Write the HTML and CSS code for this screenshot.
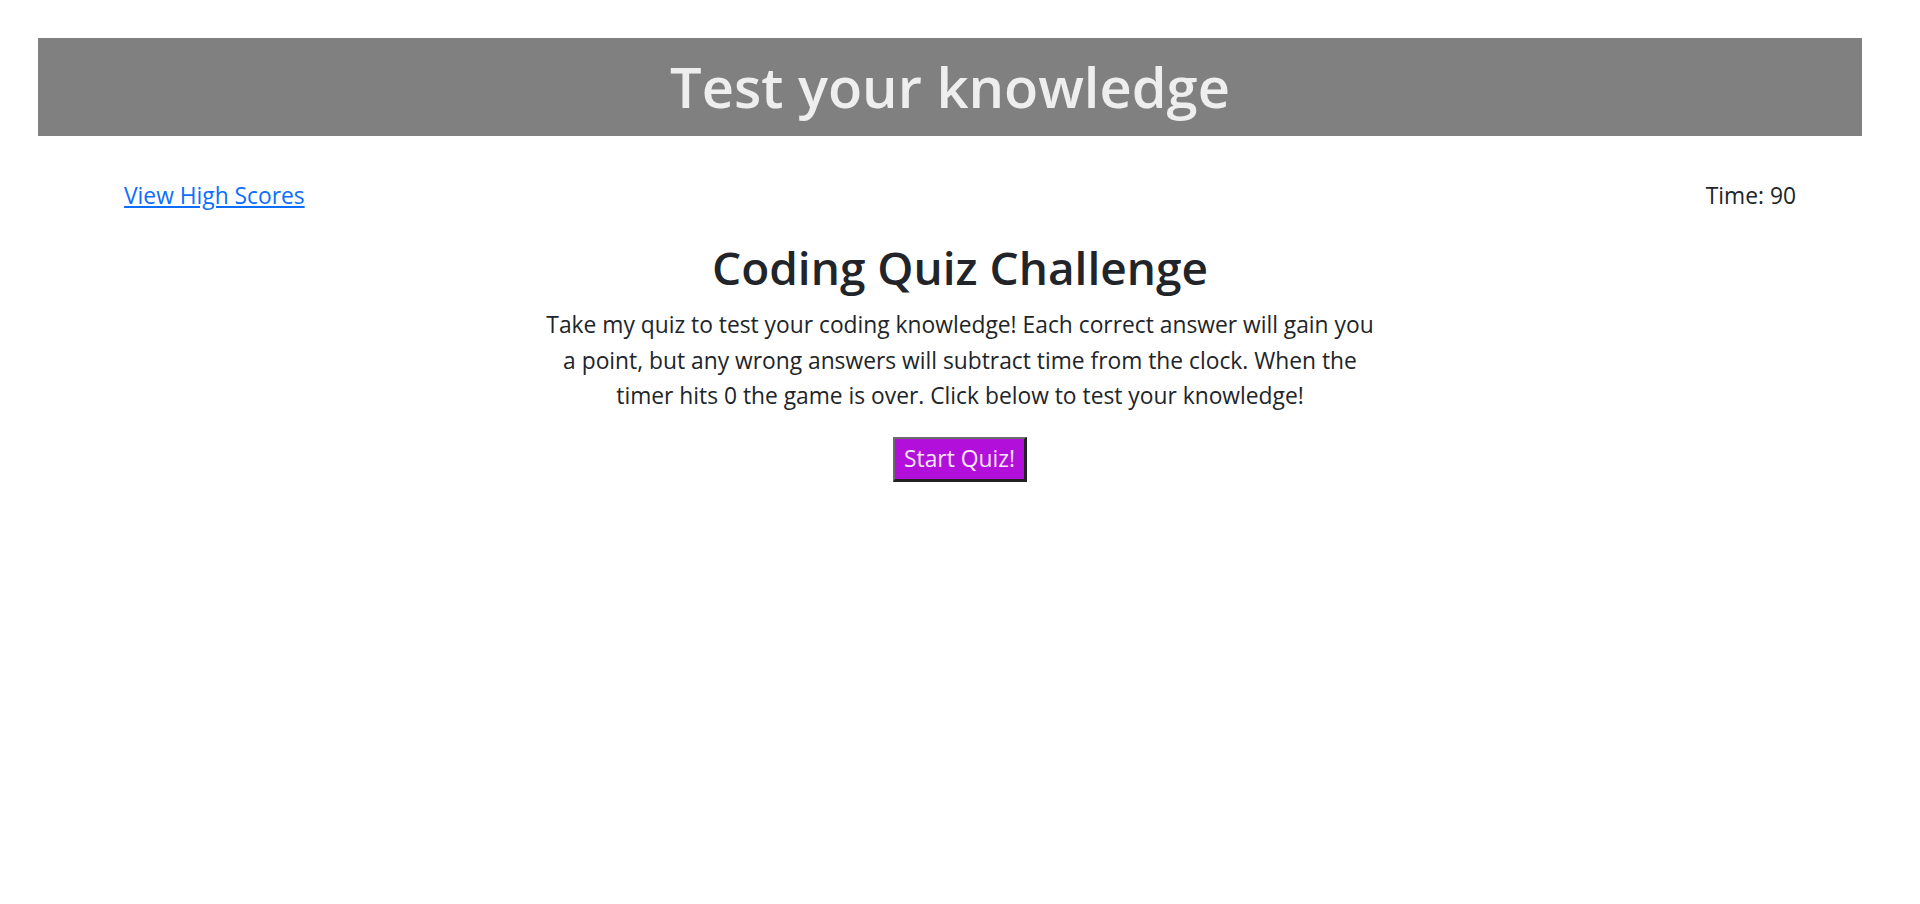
FILE: index.html
```html
<!DOCTYPE html>
<html lang="en">
<head>
<meta charset="utf-8">
<title>Coding Quiz</title>
<link rel="stylesheet" href="styles.css">
</head>
<body>
<header class="banner">
  <h1 class="banner-title">Test your knowledge</h1>
</header>
<nav class="topbar">
  <a class="scores-link" href="#">View High Scores</a>
  <span class="timer">Time: 90</span>
</nav>
<main class="intro">
  <h2 class="intro-title">Coding Quiz Challenge</h2>
  <p class="intro-text">Take my quiz to test your coding knowledge! Each correct answer will gain you a point, but any wrong answers will subtract time from the clock. When the timer hits 0 the game is over. Click below to test your knowledge!</p>
  <button class="start-btn" type="button">Start Quiz!</button>
</main>
</body>
</html>
```

FILE: styles.css
```css
html, body {
  margin: 0;
  padding: 0;
  background: #fff;
}
body {
  font-family: "Open Sans", "Noto Sans", sans-serif;
  color: #212529;
  font-size: 22.8px;
  line-height: 1.5;
}
.banner {
  width: 95%;
  margin: 38px 0 0 38px;
  height: 98px;
  background: #808080;
  display: flex;
  align-items: center;
  justify-content: center;
}
.banner-title {
  margin: -2px 0 0;
  color: #eeeeee;
  font-size: 56px;
  font-weight: 600;
  line-height: 1;
}
.topbar {
  display: flex;
  justify-content: space-between;
  padding: 0 124px;
  margin-top: 43px;
}
.scores-link {
  color: #0d6efd;
  text-decoration: underline;
}
.timer {
  color: #212529;
}
.intro {
  display: flex;
  flex-direction: column;
  align-items: center;
  text-align: center;
}
.intro-title {
  margin: 27px 0 0;
  font-size: 46px;
  font-weight: 600;
  line-height: 1.2;
}
.intro-text {
  max-width: 840px;
  margin: 12px 0 23px;
  line-height: 35.5px;
}
.start-btn {
  font-family: inherit;
  font-size: 22.8px;
  color: #f3e6f5;
  background: #b30fdb;
  border-style: solid;
  border-width: 2px 3px 3px 2px;
  border-color: #6b6b6b #222 #222 #6b6b6b;
  padding: 3px 9px;
  line-height: 1.5;
}
```
